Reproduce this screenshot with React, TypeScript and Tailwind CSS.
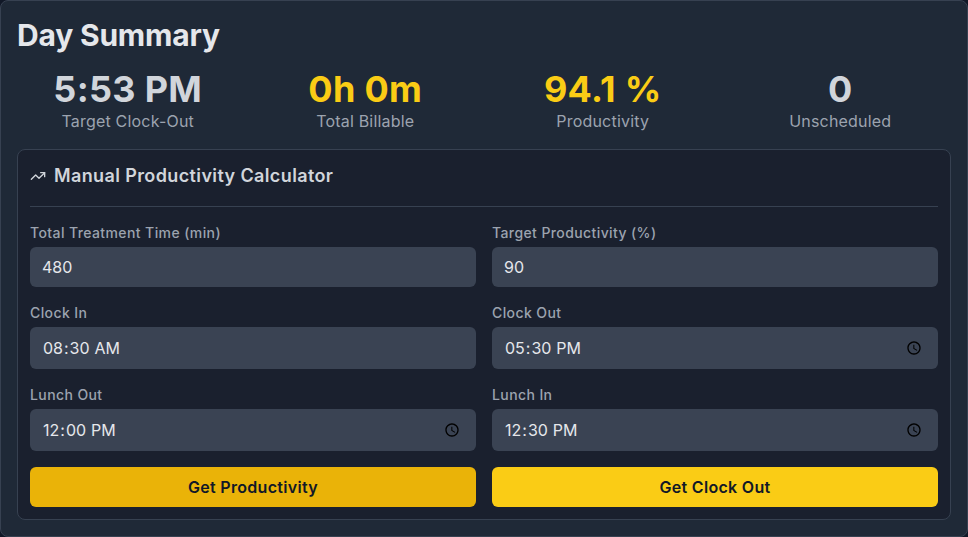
import { TrendingUp } from "lucide-react"

function Stat({value,label,accent}:{value:string,label:string,accent?:boolean}) {
    return(
        <div className="text-center">
            <div className={`text-4xl font-bold leading-10 tracking-[0.3px] ${accent?"text-[#facc15]":"text-[#d1d5db]"}`}>{value}</div>
            <div className="text-base leading-6 tracking-[0.2px] text-[#9ca3af]">{label}</div>
        </div>
    )
}

function Field({label,type,value,noPicker}:{label:string,type:string,value:string,noPicker?:boolean}) {
    return(
        <div>
            <label className="block mb-1 text-sm leading-5 font-medium tracking-[0.4px] text-[#9ca3af]">{label}</label>
            <input
                type={type}
                defaultValue={value}
                className={`w-full rounded-md bg-[#3a4353] px-3 text-base text-[#e5e7eb] outline-none ${type==="time"?"h-[42px]":"h-10"} ${noPicker?"[&::-webkit-calendar-picker-indicator]:opacity-0":""}`}
            />
        </div>
    )
}

export default function App() {
    return(
        <div className="bg-[#111827] min-h-screen" style={{fontFamily:"Inter, sans-serif"}}>
            <section className="bg-[#1f2937] border border-[#374151] rounded-lg p-4">
                <h2 className="text-3xl leading-9 font-bold tracking-[-0.2px] text-[#e5e7eb]">Day Summary</h2>
                <div className="grid grid-cols-4 gap-4 mt-4 mb-4">
                    <Stat value="5:53 PM" label="Target Clock-Out"/>
                    <Stat value="0h 0m" label="Total Billable" accent/>
                    <Stat value="94.1 %" label="Productivity" accent/>
                    <Stat value="0" label="Unscheduled"/>
                </div>
                <div className="bg-[#1a202e] border border-[#374151] rounded-lg px-3 pb-3">
                    <div className="flex items-center gap-2 pt-3 pb-4 border-b border-[#374151] text-[#d1d5db]">
                        <TrendingUp size={16}/>
                        <h3 className="text-lg leading-7 font-semibold tracking-[0.38px]">Manual Productivity Calculator</h3>
                    </div>
                    <div className="grid grid-cols-2 gap-4 mt-4">
                        <Field label="Total Treatment Time (min)" type="number" value="480"/>
                        <Field label="Target Productivity (%)" type="number" value="90"/>
                        <Field label="Clock In" type="time" value="08:30" noPicker/>
                        <Field label="Clock Out" type="time" value="17:30"/>
                        <Field label="Lunch Out" type="time" value="12:00"/>
                        <Field label="Lunch In" type="time" value="12:30"/>
                    </div>
                    <div className="grid grid-cols-2 gap-4 mt-4">
                        <button className="h-10 rounded-md bg-[#eab308] text-base font-semibold tracking-[0.3px] text-[#111827]">Get Productivity</button>
                        <button className="h-10 rounded-md bg-[#facc15] text-base font-semibold tracking-[0.3px] text-[#111827]">Get Clock Out</button>
                    </div>
                </div>
            </section>
        </div>
    )
}
